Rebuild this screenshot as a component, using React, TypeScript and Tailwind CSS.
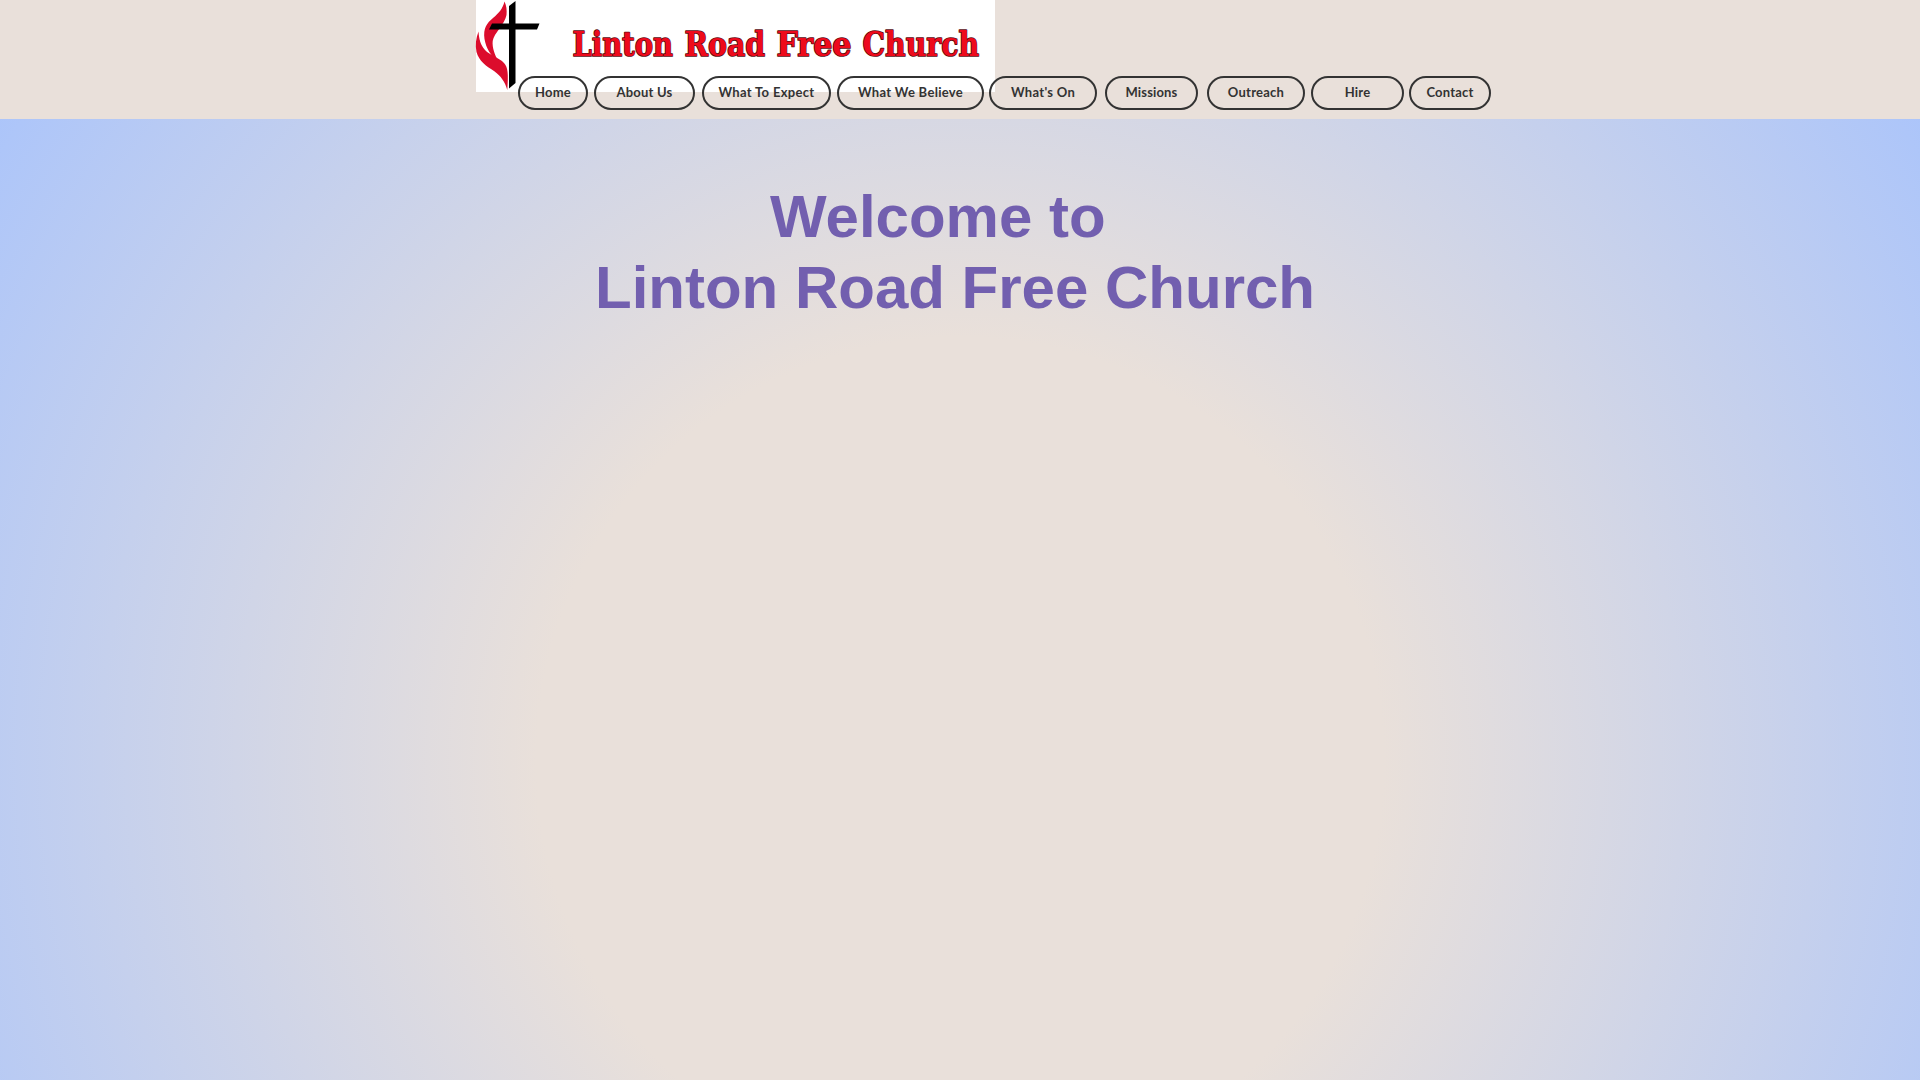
type NavItem = { label: string; box: string };

const navItems: NavItem[] = [
  { label: "Home", box: "w-[70px] tracking-[0.25px]" },
  { label: "About Us", box: "ml-[6px] w-[101px] tracking-[0.2px]" },
  { label: "What To Expect", box: "ml-[7px] w-[129px] tracking-[0.32px]" },
  { label: "What We Believe", box: "ml-[6px] w-[147px] tracking-[0.3px]" },
  { label: "What's On", box: "ml-[5px] w-[108px] tracking-[0.3px]" },
  { label: "Missions", box: "ml-[8px] w-[93px] tracking-[0.15px]" },
  { label: "Outreach", box: "ml-[9px] w-[98px] tracking-[0.25px]" },
  { label: "Hire", box: "ml-[6px] w-[93px] tracking-[0.2px]" },
  { label: "Contact", box: "ml-[5px] w-[82px] tracking-[0.2px]" },
];

const logoWords = [
  { word: "Linton", x: 96.5, width: 100.5 },
  { word: "Road", x: 208.5, width: 80.5 },
  { word: "Free", x: 300.5, width: 75 },
  { word: "Church", x: 386.5, width: 116.5 },
];

function Logo() {
  return (
    <svg width="519" height="92" viewBox="0 0 519 92" className="block overflow-visible bg-white">
      <path
        d="M28.500 1.500C30.500 6 31 10 30.500 15C29 24 18 33 16.700 41C16 48 19 55 22 60.700C15 57 10 48 8.500 39C7 28 11 23 17 18C23 13 26.500 9 28.500 1.500Z"
        fill="#dc0c2c"
      />
      <path
        d="M2.500 31.500C3 39 4.500 45 9 50C14 55.500 23 57.500 28 63C32 67.500 32.500 74 31.300 90C29 82 25 76 18 71C10 66 3 61 0.500 52C-1 45 0 38 2.500 31.500Z"
        fill="#dc0c2c"
      />
      <path d="M33 6L39.500 1V83L33 88.500Z M16 23.500H63.500L61 29.500H13Z" fill="#000" />
      <g
        fill="#ee0a1c"
        stroke="#5a0a10"
        strokeWidth="1.7"
        strokeLinejoin="round"
        paintOrder="stroke"
        fontSize="33.5"
        fontWeight="700"
        fontFamily="'DejaVu Serif', serif"
      >
        {logoWords.map((w) => (
          <text key={w.word} x={w.x} y="55.5" textLength={w.width} lengthAdjust="spacingAndGlyphs">
            {w.word}
          </text>
        ))}
      </g>
    </svg>
  );
}

export default function App() {
  return (
    <div className="flex h-[1080px] w-full flex-col overflow-hidden">
      <header className="h-[119px] shrink-0 bg-[#e9e0da] pl-[476px]">
        <Logo />
        <nav className="relative -mt-4 ml-[42px] flex h-[34px]">
          {navItems.map((item) => (
            <a
              key={item.label}
              href="#"
              className={`${item.box} flex shrink-0 items-center justify-center rounded-full border-2 border-[#333] font-['Lato',sans-serif] text-[13px] font-bold whitespace-nowrap text-[#333]`}
            >
              {item.label}
            </a>
          ))}
        </nav>
      </header>
      <main className="flex-1 bg-[radial-gradient(circle_1160px_at_960px_642px,#e9e0da_36.5%,#acc5fa_100%)] pt-[62px] pl-[595px]">
        <h1 className="w-[719px] text-center font-['Liberation_Sans',sans-serif] text-[60px] leading-[71px] font-bold whitespace-nowrap text-[#725faf]">
          Welcome to&nbsp;&nbsp;
          <br />
          Linton Road Free Church
        </h1>
      </main>
    </div>
  );
}
